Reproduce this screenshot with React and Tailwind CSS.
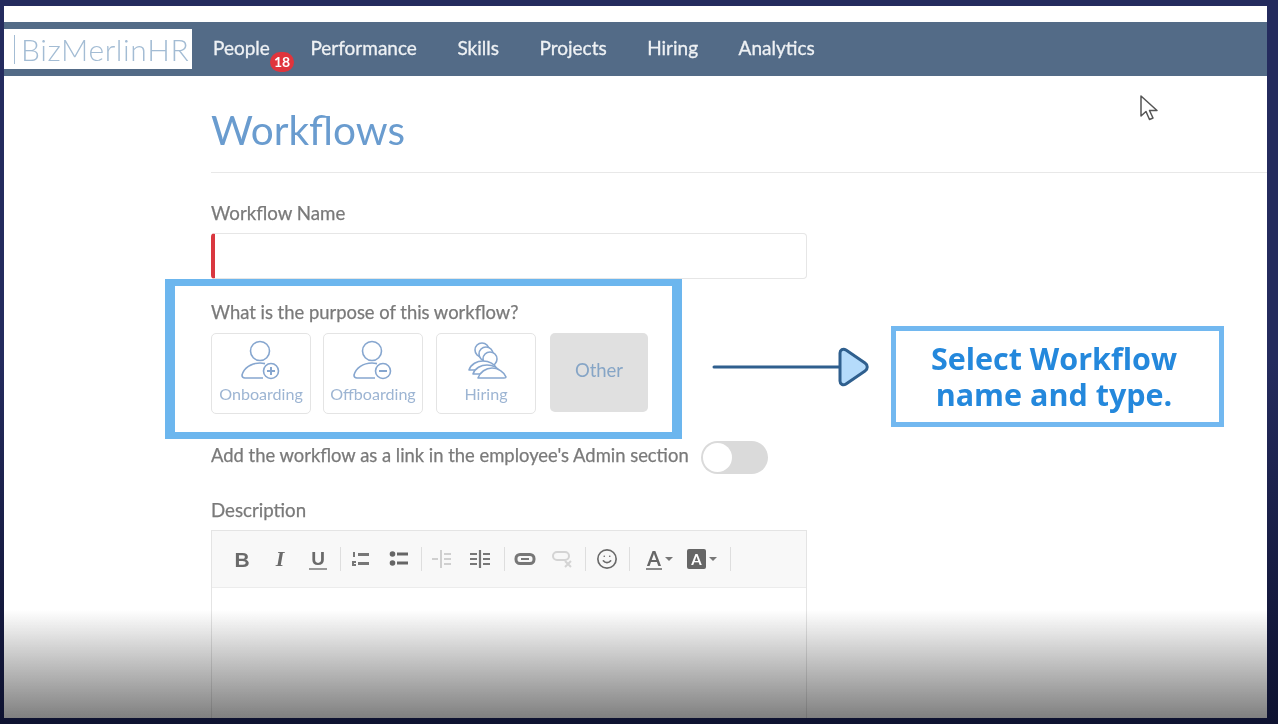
import { Smile } from "lucide-react";

const navItems = ["People", "Performance", "Skills", "Projects", "Hiring", "Analytics"];

const PersonIcon = ({ minus }) => (
  <svg width="44" height="44" viewBox="0 0 44 44" fill="none" stroke="#86a6cf" strokeWidth="1.600">
    <circle cx="21" cy="12" r="9.500" />
    <path d="M24 39H6c-2 0-3-1-3-3 2-7 9-12 18-12 2 0 3 .2 5 .6" />
    <circle cx="32" cy="32" r="7.500" fill="white" />
    <path d="M28 32h8" strokeWidth="2" />
    {!minus && <path d="M32 28v8" strokeWidth="2" />}
  </svg>
);

const HiringIcon = () => (
  <svg width="44" height="44" viewBox="0 0 44 44" fill="white" stroke="#86a6cf" strokeWidth="1.600" strokeLinejoin="round">
    <circle cx="18" cy="11" r="7" />
    <circle cx="22" cy="15" r="7" />
    <circle cx="26" cy="20" r="7" />
    <path d="M5 31c2-6 8-9 14-9s12 3 14 8c0 1-1 1-2 1H7c-1 0-2 0-2 0z" />
    <path d="M9 35c2-6 8-9 14-9s12 3 14 8c0 1-1 1-2 1H11c-1 0-2 0-2 0z" />
    <path d="M14 39c2-6 8-10 14-10s12 4 14 9c0 1-1 1-2 1z" />
  </svg>
);

const PurposeCard = ({ icon, label, className }) => (
  <div className={`w-[100px] h-[81px] rounded-[5px] border border-[#e4e4e4] bg-white flex flex-col items-center pt-[5px] ${className}`}>
    {icon}
    <span className="text-[16.100px] leading-[18px] mt-[2px] text-[#9db5d3] whitespace-nowrap">{label}</span>
  </div>
);

const Sep = () => <span className="w-px h-[24px] bg-[#dedede] ml-[3px] mr-[1px] shrink-0" />;

const Slot = ({ children }) => <span className="w-[38px] flex items-center justify-center shrink-0">{children}</span>;

const Toolbar = () => (
  <div className="h-[57px] bg-[#f8f8f8] border-b border-[#ececec] flex items-center pl-[11px] text-[#6a6a6a]">
    <Slot><span className="text-[21px] leading-none font-bold font-['Liberation_Sans',sans-serif]">B</span></Slot>
    <Slot><span className="text-[22px] leading-none font-bold italic font-['Liberation_Serif',serif]">I</span></Slot>
    <Slot>
      <span className="text-[19px] leading-[19px] font-bold border-b-2 border-[#999] px-[2px] font-['Liberation_Sans',sans-serif]">U</span>
    </Slot>
    <Sep />
    <Slot>
      <svg width="20" height="18" viewBox="0 0 20 18" fill="#777">
        <rect x="7" y="3" width="11" height="3" />
        <rect x="7" y="12" width="11" height="3" />
        <rect x="2" y="2" width="2" height="5" />
        <path d="M1 11h4v2H3v1h2v2H1z" />
      </svg>
    </Slot>
    <Slot>
      <svg width="20" height="18" viewBox="0 0 20 18" fill="#666">
        <circle cx="3.500" cy="4" r="2.800" />
        <circle cx="3.500" cy="13" r="2.800" />
        <rect x="8" y="2.500" width="11" height="3" />
        <rect x="8" y="11.500" width="11" height="3" />
      </svg>
    </Slot>
    <Sep />
    <Slot>
      <svg width="22" height="20" viewBox="0 0 22 20" stroke="#cfcfcf" strokeWidth="2" fill="none">
        <path d="M10 1v18M13 5h7M13 10h7M13 15h7M1 10h6" />
      </svg>
    </Slot>
    <Slot>
      <svg width="22" height="20" viewBox="0 0 22 20" stroke="#777" strokeWidth="2.200" fill="none">
        <path d="M11 1v18M14 5h7M14 10h7M14 15h7M1 5h7M1 10h7M1 15h7" />
      </svg>
    </Slot>
    <span className="w-[2px] shrink-0" />
    <Sep />
    <Slot>
      <svg width="22" height="14" viewBox="0 0 22 14" fill="none" stroke="#777" strokeWidth="3">
        <rect x="2" y="2.500" width="18" height="9" rx="4" />
        <path d="M7 7h8" strokeWidth="2" />
      </svg>
    </Slot>
    <Slot>
      <svg width="22" height="20" viewBox="0 0 22 20" fill="none" stroke="#d4d4d4" strokeWidth="2">
        <rect x="1" y="3" width="16" height="8" rx="4" />
        <path d="M13 12l6 6M19 12l-6 6" />
      </svg>
    </Slot>
    <Sep />
    <span className="w-[1px] shrink-0" />
    <Slot><Smile size={22} strokeWidth={1.800} /></Slot>
    <Sep />
    <span className="w-[50px] flex items-center pl-[15px] shrink-0">
      <span className="text-[20px] leading-[20px] font-bold border-b-2 border-[#8a8a8a] text-[#666] px-[1px]">A</span>
      <span className="ml-[3px] border-x-[4px] border-x-transparent border-t-[4px] border-t-[#777]" />
    </span>
    <span className="w-[46px] flex items-center pl-[6px] shrink-0">
      <span className="w-[19px] h-[20px] rounded-[2px] bg-[#666] text-white text-[15px] leading-[20px] font-bold text-center">A</span>
      <span className="ml-[3px] border-x-[4px] border-x-transparent border-t-[4px] border-t-[#777]" />
    </span>
    <Sep />
  </div>
);

export default function App() {
  return (
    <div className="relative w-[1278px] h-[724px] overflow-hidden bg-gradient-to-b from-[#242b5e] via-[#242b5e] to-[#0e1230] pl-[4px] pr-[11px] pt-[6px] pb-[6px] font-['Lato','Open_Sans',sans-serif] blur-[0.7px]">
      <div className="relative h-full bg-white overflow-hidden">
        {/* top nav */}
        <div className="h-[16px] bg-white" />
        <div className="h-[54px] bg-[#536b87] flex items-center">
          <div className="w-[188px] h-[40px] bg-white flex items-center text-[#a3bcd4] text-[30px] font-light tracking-[0.6px] overflow-hidden">
            <span className="-ml-[11px] w-[14px] text-[26px]">s</span>
            <span className="w-px h-[29px] bg-[#a3bcd4] ml-[7px] mr-[6px] shrink-0" />
            BizMerlinHR
          </div>
          <nav className="flex items-center ml-[21px] gap-[40.500px] text-[19px] text-[#eef1f4] [-webkit-text-stroke:0.3px_#eef1f4] -mt-[2px]">
            {navItems.map((item) => (
              <span key={item} className="relative">
                {item}
                {item === "People" && (
                  <span className="absolute left-[57px] top-[18px] h-[20px] min-w-[24px] rounded-full bg-[#e0343c] text-white text-[14px] leading-[20px] font-bold text-center [-webkit-text-stroke:0]">
                    18
                  </span>
                )}
              </span>
            ))}
          </nav>
        </div>

        {/* page content */}
        <div className="ml-[207px] w-[1056px]">
          <h1 className="text-[40.600px] leading-[50px] mt-[29px] text-[#6a9ccf]">Workflows</h1>
          <div className="h-px bg-[#e8e8e8] mt-[17px]" />

          <div className="w-[596px] text-[#7a7a7a] [-webkit-text-stroke:0.25px_#7a7a7a]">
            <div className="text-[18.700px] leading-[22px] mt-[29px]">Workflow Name</div>
            <div className="h-[46px] mt-[9px] rounded-[4px] border border-[#e6e6e6] border-l-[4px] border-l-[#d9373f]" />

            <div className="text-[18.400px] leading-[22px] mt-[22px]">What is the purpose of this workflow?</div>
            <div className="flex mt-[10px] [-webkit-text-stroke:0]">
              <PurposeCard icon={<PersonIcon />} label="Onboarding" />
              <PurposeCard icon={<PersonIcon minus />} label="Offboarding" className="ml-[12px]" />
              <PurposeCard icon={<HiringIcon />} label="Hiring" className="ml-[13px]" />
              <div className="w-[98px] h-[79px] ml-[14px] rounded-[5px] bg-[#e0e0e0] text-[18.500px] text-[#86a5c6] flex items-center justify-center pb-[4px]">
                Other
              </div>
            </div>

            <div className="flex items-center mt-[27px] h-[33px]">
              <span className="text-[18.400px] -mt-[3px] whitespace-nowrap">
                Add the workflow as a link in the employee's Admin section
              </span>
              <span className="ml-[12px] w-[67px] h-[33px] rounded-full bg-[#dadada] p-[2px] shrink-0">
                <span className="block w-[29px] h-[29px] rounded-full bg-white" />
              </span>
            </div>

            <div className="text-[18.700px] leading-[22px] mt-[25px]">Description</div>
            <div className="mt-[9px] h-[300px] border border-[#e4e4e4] [-webkit-text-stroke:0]">
              <Toolbar />
            </div>
          </div>
        </div>

        {/* highlight box */}
        <div className="absolute left-[161px] top-[273px] w-[517px] h-[160px] border-x-[10px] border-y-[7px] border-[#6cb6ee]" />

        {/* arrow */}
        <svg className="absolute left-[708px] top-[336px]" width="160" height="50" viewBox="0 0 160 50" fill="none">
          <path d="M2 25H128" stroke="#2f5f8e" strokeWidth="3" strokeLinecap="round" />
          <path d="M128 11c0-3 3-5 6-3l19 13c3 2 3 6 0 8l-19 13c-3 2-6 0-6-3z" fill="#b5dbfb" stroke="#2f5f8e" strokeWidth="3" strokeLinejoin="round" />
        </svg>

        {/* callout */}
        <div className="absolute left-[887px] top-[320px] w-[333px] h-[101px] border-[5px] border-[#72b8f0] bg-white flex items-center justify-center text-center text-[30.500px] leading-[36px] font-bold text-[#2488dc] font-['Open_Sans',sans-serif] pr-[7px] pb-[2px]">
          <span>
            Select Workflow
            <br />
            name and type.
          </span>
        </div>

        {/* mouse cursor */}
        <svg className="absolute left-[1135px] top-[88px]" width="20" height="30" viewBox="0 0 20 30" fill="white" stroke="#555" strokeWidth="1.500" strokeLinejoin="round">
          <path d="M2 2v20l5-4.500 3.500 8 3.500-1.500-3.500-7.500H18z" />
        </svg>

        {/* bottom fade */}
        <div className="absolute left-0 right-0 bottom-0 h-[108px] bg-gradient-to-b from-white/0 to-[#808080]/100 mix-blend-multiply" />
      </div>
    </div>
  );
}
